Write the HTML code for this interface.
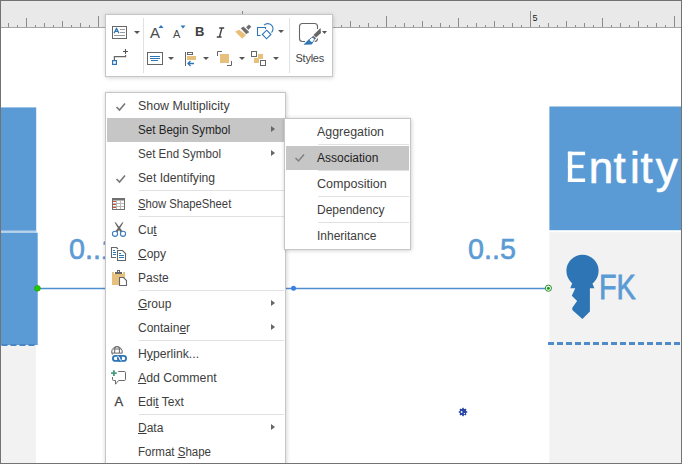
<!DOCTYPE html>
<html><head><meta charset="utf-8">
<style>
*{margin:0;padding:0;box-sizing:border-box}
html,body{width:682px;height:464px;overflow:hidden;background:#fff}
body{position:relative;font-family:"Liberation Sans",sans-serif}
.abs{position:absolute}
#frame{position:absolute;left:0;top:0;width:682px;height:464px;border:1px solid #737373;pointer-events:none;z-index:50}
#ruler{position:absolute;left:0;top:0;width:682px;height:28px;background:#e9e9e9;border-bottom:1px solid #a6a6a6}
.tk{position:absolute;width:1px;background:#8c8c8c}
.rl5{position:absolute;left:532.5px;top:13px;font-size:9px;color:#222;line-height:10px}
/* toolbar */
#tb{position:absolute;left:105px;top:14px;width:228px;height:63px;background:#fff;border:1px solid #c6c6c6;box-shadow:0 0 4px rgba(0,0,0,0.10),1px 2px 4px rgba(0,0,0,0.08);z-index:10}
.vsep{position:absolute;width:1px;background:#dfe1e5}
.dd{position:absolute;width:0;height:0;border-left:3px solid transparent;border-right:3px solid transparent;border-top:3px solid #555}
/* menu */
#menu{position:absolute;left:105px;top:92px;width:181px;height:380px;background:#fff;border:1px solid #c6c6c6;box-shadow:0 0 4px rgba(0,0,0,0.10),1px 1px 4px rgba(0,0,0,0.10);z-index:20}
.mi{position:absolute;left:1px;width:178px;height:24px}
.mi.hl{background:#c6c6c6}
.hl .lb{color:#1f1f1f!important}
.mi .lb{transform-origin:0 0;position:absolute;left:31px;top:5px;font-size:12px;line-height:14px;color:#3d3d3d;white-space:nowrap}
.mi .ck{position:absolute;left:7.5px;top:8px}
.ar{position:absolute;left:164px;top:8px;width:0;height:0;border-top:3.5px solid transparent;border-bottom:3.5px solid transparent;border-left:4px solid #666}
.sep{position:absolute;left:33px;width:145px;height:1px;background:#dfe1e5}
u{text-decoration:underline;text-decoration-thickness:1px;text-underline-offset:1px}
#sub{position:absolute;left:284px;top:118px;width:127px;height:132px;background:#fff;border:1px solid #c6c6c6;box-shadow:0 0 4px rgba(0,0,0,0.10),1px 1px 4px rgba(0,0,0,0.10);z-index:30}
.si{position:absolute;left:1px;width:123px;height:25px}
.si.hl{background:linear-gradient(#fff 0,#fff 1px,#c6c6c6 1px)}
.si .lb{transform-origin:0 0;position:absolute;left:31px;top:6px;font-size:12px;line-height:14px;color:#3d3d3d;white-space:nowrap}
.si .ck2{position:absolute;left:8px;top:8px}
.ssep{position:absolute;left:33px;width:91px;height:1px;background:#dfe1e5}
</style></head><body>
<div id="ruler">
<div class="tk" style="left:8px;top:23px;height:4px"></div>
<div class="tk" style="left:17px;top:25px;height:2px"></div>
<div class="tk" style="left:26px;top:18px;height:9px"></div>
<div class="tk" style="left:35px;top:25px;height:2px"></div>
<div class="tk" style="left:44px;top:23px;height:4px"></div>
<div class="tk" style="left:53px;top:25px;height:2px"></div>
<div class="tk" style="left:62px;top:21px;height:6px"></div>
<div class="tk" style="left:71px;top:25px;height:2px"></div>
<div class="tk" style="left:80px;top:23px;height:4px"></div>
<div class="tk" style="left:89px;top:25px;height:2px"></div>
<div class="tk" style="left:98px;top:16px;height:11px"></div>
<div class="tk" style="left:107px;top:25px;height:2px"></div>
<div class="tk" style="left:116px;top:23px;height:4px"></div>
<div class="tk" style="left:125px;top:25px;height:2px"></div>
<div class="tk" style="left:134px;top:21px;height:6px"></div>
<div class="tk" style="left:143px;top:25px;height:2px"></div>
<div class="tk" style="left:152px;top:23px;height:4px"></div>
<div class="tk" style="left:161px;top:25px;height:2px"></div>
<div class="tk" style="left:170px;top:18px;height:9px"></div>
<div class="tk" style="left:179px;top:25px;height:2px"></div>
<div class="tk" style="left:188px;top:23px;height:4px"></div>
<div class="tk" style="left:197px;top:25px;height:2px"></div>
<div class="tk" style="left:206px;top:21px;height:6px"></div>
<div class="tk" style="left:215px;top:25px;height:2px"></div>
<div class="tk" style="left:224px;top:23px;height:4px"></div>
<div class="tk" style="left:233px;top:25px;height:2px"></div>
<div class="tk" style="left:242px;top:11px;height:16px"></div>
<div class="tk" style="left:251px;top:25px;height:2px"></div>
<div class="tk" style="left:260px;top:23px;height:4px"></div>
<div class="tk" style="left:269px;top:25px;height:2px"></div>
<div class="tk" style="left:278px;top:21px;height:6px"></div>
<div class="tk" style="left:287px;top:25px;height:2px"></div>
<div class="tk" style="left:296px;top:23px;height:4px"></div>
<div class="tk" style="left:305px;top:25px;height:2px"></div>
<div class="tk" style="left:314px;top:18px;height:9px"></div>
<div class="tk" style="left:323px;top:25px;height:2px"></div>
<div class="tk" style="left:332px;top:23px;height:4px"></div>
<div class="tk" style="left:341px;top:25px;height:2px"></div>
<div class="tk" style="left:350px;top:21px;height:6px"></div>
<div class="tk" style="left:359px;top:25px;height:2px"></div>
<div class="tk" style="left:368px;top:23px;height:4px"></div>
<div class="tk" style="left:377px;top:25px;height:2px"></div>
<div class="tk" style="left:386px;top:16px;height:11px"></div>
<div class="tk" style="left:395px;top:25px;height:2px"></div>
<div class="tk" style="left:404px;top:23px;height:4px"></div>
<div class="tk" style="left:413px;top:25px;height:2px"></div>
<div class="tk" style="left:422px;top:21px;height:6px"></div>
<div class="tk" style="left:431px;top:25px;height:2px"></div>
<div class="tk" style="left:440px;top:23px;height:4px"></div>
<div class="tk" style="left:449px;top:25px;height:2px"></div>
<div class="tk" style="left:458px;top:18px;height:9px"></div>
<div class="tk" style="left:467px;top:25px;height:2px"></div>
<div class="tk" style="left:476px;top:23px;height:4px"></div>
<div class="tk" style="left:485px;top:25px;height:2px"></div>
<div class="tk" style="left:494px;top:21px;height:6px"></div>
<div class="tk" style="left:503px;top:25px;height:2px"></div>
<div class="tk" style="left:512px;top:23px;height:4px"></div>
<div class="tk" style="left:521px;top:25px;height:2px"></div>
<div class="tk" style="left:530px;top:11px;height:16px"></div>
<div class="tk" style="left:539px;top:25px;height:2px"></div>
<div class="tk" style="left:548px;top:23px;height:4px"></div>
<div class="tk" style="left:557px;top:25px;height:2px"></div>
<div class="tk" style="left:566px;top:21px;height:6px"></div>
<div class="tk" style="left:575px;top:25px;height:2px"></div>
<div class="tk" style="left:584px;top:23px;height:4px"></div>
<div class="tk" style="left:593px;top:25px;height:2px"></div>
<div class="tk" style="left:602px;top:18px;height:9px"></div>
<div class="tk" style="left:611px;top:25px;height:2px"></div>
<div class="tk" style="left:620px;top:23px;height:4px"></div>
<div class="tk" style="left:629px;top:25px;height:2px"></div>
<div class="tk" style="left:638px;top:21px;height:6px"></div>
<div class="tk" style="left:647px;top:25px;height:2px"></div>
<div class="tk" style="left:656px;top:23px;height:4px"></div>
<div class="tk" style="left:665px;top:25px;height:2px"></div>
<div class="tk" style="left:674px;top:16px;height:11px"></div>
<div class="rl5">5</div>
</div>

<!-- left entity -->
<svg class="abs" style="left:0;top:0" width="682" height="464">
 <rect x="1" y="107.4" width="35.2" height="123.4" fill="#5b9bd5"/>
 <rect x="1" y="230.8" width="35.6" height="2" fill="#b9d2eb"/>
 <rect x="1" y="232.8" width="36.7" height="112.2" fill="#5b9bd5"/>
 <rect x="549.4" y="106.5" width="133" height="123.7" fill="#5b9bd5"/>
 <rect x="549.4" y="232.2" width="133" height="232" fill="#f2f2f2"/>
</svg>
<div class="abs" style="left:1px;top:345px;width:35.4px;height:119px;background:#f2f2f2"></div>
<svg class="abs" style="left:0;top:343px" width="40" height="4"><line x1="1.5" y1="2" x2="37" y2="2" stroke="#4a86c5" stroke-width="2" stroke-dasharray="6 3"/></svg>

<!-- right entity -->

<svg class="abs" style="left:560px;top:145px" width="40" height="45"><g fill="#fff"><rect x="7.9" y="6.7" width="4.3" height="30.3"/><rect x="7.9" y="6.7" width="17.2" height="3.5"/><rect x="7.9" y="19.8" width="15.6" height="3.3"/><rect x="7.9" y="33.5" width="17.2" height="3.5"/></g></svg>
<div class="abs" style="left:588.8px;top:138px;font-size:44px;line-height:60px;color:#fff;-webkit-text-stroke:0.6px #fff">n</div>
<div class="abs" style="left:613.6px;top:138px;font-size:44px;line-height:60px;color:#fff;-webkit-text-stroke:0.6px #fff">t</div>
<div class="abs" style="left:629.9px;top:138px;font-size:44px;line-height:60px;color:#fff;-webkit-text-stroke:0.6px #fff">i</div>
<div class="abs" style="left:640.4px;top:138px;font-size:44px;line-height:60px;color:#fff;-webkit-text-stroke:0.6px #fff">t</div>
<div class="abs" style="left:655.8px;top:138px;font-size:44px;line-height:60px;color:#fff;-webkit-text-stroke:0.6px #fff">y</div>

<svg class="abs" style="left:540px;top:340px" width="142" height="6"><line x1="8" y1="3.5" x2="142" y2="3.5" stroke="#4f8bc9" stroke-width="3" stroke-dasharray="6 3"/></svg>
<svg class="abs" style="left:560px;top:250px" width="40" height="72" viewBox="0 0 40 72">
 <circle cx="22.5" cy="20.8" r="16.1" fill="#2e75b6"/>
 <path d="M12.3 32.9 H32.2 L34.4 38.2 H29.9 V61.6 L22.4 69.1 L12.3 60 V57.8 L17.1 51 L11.8 45.7 L15.3 38.2 H10.3 Z" fill="#2e75b6"/>
</svg>
<div class="abs" style="left:599px;top:246.5px;font-size:35.5px;line-height:80px;color:#5b9bd5;-webkit-text-stroke:0.8px #5b9bd5;white-space:nowrap;transform-origin:0 0;transform:scaleX(0.81)">FK</div>

<!-- labels -->
<div class="abs" style="left:68.7px;top:208.6px;font-size:30.2px;line-height:80px;color:#5b9bd5;-webkit-text-stroke:0.6px #5b9bd5;white-space:nowrap;transform-origin:0 0;transform:scaleX(0.95)">0..1</div>
<div class="abs" style="left:467.5px;top:208.6px;font-size:30.2px;line-height:80px;color:#5b9bd5;-webkit-text-stroke:0.6px #5b9bd5;white-space:nowrap;transform-origin:0 0;transform:scaleX(0.95)">0..5</div>

<!-- connector -->
<svg class="abs" style="left:0;top:280px" width="682" height="16"><line x1="37" y1="8.5" x2="549" y2="8.5" stroke="#4f8fd0" stroke-width="1.7"/></svg>
<svg class="abs" style="left:32px;top:283px" width="12" height="12"><circle cx="5.5" cy="5.3" r="2.9" fill="#22c800" stroke="#1a9a00" stroke-width="0.6"/></svg>
<svg class="abs" style="left:542px;top:282px" width="13" height="13"><circle cx="6.4" cy="6.2" r="3.1" fill="#fff" stroke="#2e8b2e" stroke-width="1"/><circle cx="6.4" cy="6.2" r="1.5" fill="#0aa50a"/></svg>
<svg class="abs" style="left:289px;top:284px" width="9" height="9"><circle cx="4.5" cy="4.3" r="2.5" fill="#3a80e0"/></svg>
<!-- small gear handle -->
<svg class="abs" style="left:456px;top:405px" width="14" height="14" viewBox="0 0 14 14">
 <g fill="#2b47a6">
  <circle cx="7" cy="7" r="3.3"/>
  <rect x="6.2" y="2.8" width="1.6" height="8.4"/>
  <rect x="2.8" y="6.2" width="8.4" height="1.6"/>
  <rect x="6.2" y="2.8" width="1.6" height="8.4" transform="rotate(45 7 7)"/>
  <rect x="6.2" y="2.8" width="1.6" height="8.4" transform="rotate(-45 7 7)"/>
 </g>
 <circle cx="5.6" cy="7" r="0.9" fill="#fff"/>
 <circle cx="8.4" cy="8.6" r="0.7" fill="#fff"/>
</svg>
<!-- toolbar -->
<div id="tb">
 <!-- text block icon -->
 <svg class="abs" style="left:6px;top:11px" width="16" height="14" viewBox="0 0 16 14">
  <rect x="0.5" y="0.5" width="14" height="12" fill="#fff" stroke="#666"/>
  <path d="M2.1 7.2 L4.5 2.3 L6.9 7.2 M3.2 5.4 H5.8" stroke="#2e75b6" stroke-width="1.3" fill="none" stroke-linejoin="round"/>
  <rect x="8" y="3" width="5" height="1" fill="#999"/><rect x="8" y="6" width="5" height="1" fill="#999"/><rect x="2" y="9" width="11" height="1" fill="#999"/>
 </svg>
 <div class="dd" style="left:28px;top:16px"></div>
 <div class="vsep" style="left:37px;top:3px;height:55px"></div>
 <!-- grow font -->
 <div class="abs" style="left:44px;top:10px;font-size:15px;line-height:15px;color:#4a4a4a">A</div>
 <svg class="abs" style="left:52px;top:10px" width="7" height="4"><path d="M0.5 3 L3 0 L5.5 3 Z" fill="#2e75b6"/></svg>
 <div class="abs" style="left:67px;top:14px;font-size:11px;line-height:11px;color:#4a4a4a">A</div>
 <svg class="abs" style="left:74px;top:10px" width="7" height="4"><path d="M0.5 0.5 L5.5 0.5 L3 3.5 Z" fill="#2e75b6"/></svg>
 <div class="abs" style="left:89px;top:10px;font:bold 13px 'Liberation Sans',sans-serif;line-height:14px;color:#404040">B</div>
 <svg class="abs" style="left:110px;top:12px" width="10" height="12" viewBox="0 0 10 12"><path d="M3.2 1 H8.2 M5.9 1 L3.4 10 M0.8 10 H5.6" stroke="#444" stroke-width="1.4" fill="none"/></svg>
 <!-- format painter -->
 <svg class="abs" style="left:129px;top:9px" width="18" height="16" viewBox="0 0 18 16">
  <path d="M0.1 7.4 L4.3 5.7 L11 10.9 L7.2 14.7 Z" fill="#e9bf78"/>
  <path d="M6.2 4.3 L8.6 3.1 L13.8 8.1 L11.2 9.7 Z" fill="#6a6a6a" stroke="#6a6a6a" stroke-width="0.8" stroke-linejoin="round"/>
  <path d="M11.5 3.1 L13.8 1 L16 2.6 L13.4 5.5 Z" fill="#6a6a6a" stroke="#6a6a6a" stroke-width="0.6" stroke-linejoin="round"/>
 </svg>
 <!-- shapes -->
 <svg class="abs" style="left:150px;top:8px" width="20" height="18" viewBox="0 0 20 18">
  <path d="M4.6 12.5 H1.5 V4.5 H9.5 V6" stroke="#2e75b6" stroke-width="1.1" fill="none"/>
  <path d="M8 2.2 A5.2 5.2 0 1 1 15.5 9.6" stroke="#2e75b6" stroke-width="1.1" fill="none"/>
  <path d="M10.6 7.2 L14.9 11.5 L10.6 15.8 L6.3 11.5 Z" stroke="#2e75b6" stroke-width="1.1" fill="none"/>
 </svg>
 <div class="dd" style="left:172px;top:15px"></div>
 <div class="vsep" style="left:183px;top:3px;height:55px"></div>
 <!-- styles -->
 <svg class="abs" style="left:191px;top:7px" width="34" height="26" viewBox="0 0 34 26">
  <path d="M20.5 7 V4.5 Q20.5 1.5 17.5 1.5 H5.5 Q2.5 1.5 2.5 4.5 V16.5 Q2.5 19.5 5.5 19.5 H8" stroke="#666" stroke-width="1.1" fill="none"/>
  <path d="M17.7 19.5 Q20.5 19.5 20.5 16.5" stroke="#666" stroke-width="1.1" fill="none"/>
  <path d="M23.5 6 L24 11 L19 15.5 L16.5 13 Z" fill="#666"/>
  <path d="M16.2 13.8 L19 16.3 L17.5 17.8 L14.8 15.3 Z" fill="#666"/>
  <path d="M6.5 22.8 L11.6 17.4 L16.2 20.6 L14.6 22.6 Z" fill="#2e75b6"/>
  <ellipse cx="14.2" cy="18.6" rx="3.3" ry="2.2" fill="none" stroke="#3a7cc0" stroke-width="0.9" transform="rotate(-45 14.2 18.6)"/>
  <ellipse cx="15" cy="17.8" rx="2.1" ry="1.4" fill="#fff" transform="rotate(-45 15 17.8)"/>
  <path d="M25 9 H30 L27.5 12 Z" fill="#555"/>
 </svg>
 <div class="abs" style="left:189.5px;top:36px;font-size:11px;line-height:14px;color:#444;letter-spacing:-0.25px">Styles</div>
 <!-- row 2 -->
 <svg class="abs" style="left:6px;top:34px" width="18" height="18" viewBox="0 0 18 18">
  <path d="M2.4 11.2 V7.6 H13.6 V6" stroke="#666" stroke-width="1.2" fill="none"/>
  <path d="M13.5 0 V5 M11 2.5 H16" stroke="#555" stroke-width="1.1"/>
  <rect x="0.6" y="11.6" width="3.8" height="3.8" fill="#fff" stroke="#2e75b6" stroke-width="1.2"/>
 </svg>
 <svg class="abs" style="left:41px;top:37px" width="16" height="14" viewBox="0 0 16 14">
  <rect x="0.5" y="0.5" width="15" height="12" fill="#fff" stroke="#666"/>
  <rect x="3" y="4" width="10" height="1" fill="#2e75b6"/><rect x="3" y="6" width="10" height="1" fill="#2e75b6"/><rect x="4" y="8" width="7" height="1" fill="#2e75b6"/>
 </svg>
 <div class="dd" style="left:62px;top:42px"></div>
 <svg class="abs" style="left:79px;top:37px" width="14" height="16" viewBox="0 0 14 16">
  <rect x="0" y="0" width="1" height="14" fill="#666"/>
  <rect x="2.5" y="0.5" width="5" height="2" fill="#fff" stroke="#666" stroke-width="1"/>
  <rect x="2" y="4" width="9" height="4" fill="#e8c07d"/>
  <path d="M9 11.5 H3 M5.5 9 L3 11.5 L5.5 14" stroke="#2e75b6" stroke-width="1.3" fill="none"/>
 </svg>
 <div class="dd" style="left:97px;top:42px"></div>
 <svg class="abs" style="left:111px;top:36px" width="18" height="17" viewBox="0 0 18 17">
  <path d="M0.5 5 V0.5 H5" stroke="#666" stroke-width="1" fill="none"/>
  <rect x="3" y="3" width="9" height="9" fill="#e8c07d"/>
  <path d="M14.5 10 V14.5 H10" stroke="#666" stroke-width="1" fill="none"/>
 </svg>
 <div class="dd" style="left:133px;top:42px"></div>
 <svg class="abs" style="left:145px;top:36px" width="18" height="17" viewBox="0 0 18 17">
  <rect x="0.5" y="0.5" width="5" height="5" fill="#fff" stroke="#666"/>
  <rect x="7" y="3" width="5" height="5" fill="#e8c07d"/>
  <rect x="3" y="7" width="5" height="5" fill="#e8c07d"/>
  <rect x="9.5" y="9.5" width="5" height="5" fill="#fff" stroke="#666"/>
 </svg>
 <div class="dd" style="left:167px;top:42px"></div>
</div>

<div id="menu">
<div class="mi" style="top:1px"><svg class="ck" width="12" height="10" viewBox="0 0 12 10"><path d="M1.5 5 L4.5 8 L10 1.5" stroke="#777" stroke-width="1.6" fill="none"/></svg><span class="lb" style="transform:scaleX(1.034)">Show Multiplicity</span></div>
<div class="mi hl" style="top:25px"><span class="lb" style="transform:scaleX(0.968)">Set Begin Symbol</span><div class="ar"></div></div>
<div class="mi" style="top:49px"><span class="lb" style="transform:scaleX(0.964)">Set End Symbol</span><div class="ar"></div></div>
<div class="mi" style="top:73px"><svg class="ck" width="12" height="10" viewBox="0 0 12 10"><path d="M1.5 5 L4.5 8 L10 1.5" stroke="#777" stroke-width="1.6" fill="none"/></svg><span class="lb" style="transform:scaleX(1.014)">Set Identifying</span></div>
<div class="sep" style="top:97px"></div>
<div class="mi" style="top:99px"><svg width="30" height="24" viewBox="0 0 30 24" style="position:absolute;left:0;top:0">
   <rect x="5" y="6" width="13" height="12" fill="#707070"/>
   <rect x="6" y="8" width="11" height="9" fill="#b8b8b8"/>
   <rect x="6" y="9" width="3" height="2" fill="#fff"/><rect x="10" y="9" width="3" height="2" fill="#fff"/><rect x="14" y="9" width="3" height="2" fill="#fff"/>
   <rect x="6" y="12" width="3" height="2" fill="#fff"/><rect x="10" y="12" width="3" height="2" fill="#fff"/><rect x="14" y="12" width="3" height="2" fill="#fff"/>
   <rect x="6" y="15" width="3" height="2" fill="#fff"/><rect x="10" y="15" width="3" height="2" fill="#fff"/><rect x="14" y="15" width="3" height="2" fill="#fff"/>
   <rect x="6" y="9" width="3" height="1" fill="#d9502b"/><rect x="6" y="12" width="3" height="1" fill="#d9502b"/><rect x="6" y="15" width="3" height="1" fill="#d9502b"/>
 </svg><span class="lb" style="transform:scaleX(0.938)"><u>S</u>how ShapeSheet</span></div>
<div class="sep" style="top:123px"></div>
<div class="mi" style="top:125px"><svg width="30" height="24" viewBox="0 0 30 24" style="position:absolute;left:0;top:0">
   <path d="M7.6 4.6 Q8.2 4 8.8 4.4 L15.4 13 L13.4 14.2 Z" fill="#676767"/><path d="M16.4 4.6 Q15.8 4 15.2 4.4 L8.6 13 L10.6 14.2 Z" fill="#676767"/>
   <circle cx="8" cy="15.8" r="2.6" stroke="#3a7cc0" stroke-width="1.1" fill="#fff"/>
   <circle cx="16" cy="15.8" r="2.6" stroke="#3a7cc0" stroke-width="1.1" fill="#fff"/>
 </svg><span class="lb">Cu<u>t</u></span></div>
<div class="mi" style="top:149px"><svg width="30" height="24" viewBox="0 0 30 24" style="position:absolute;left:0;top:0">
   <path d="M9 15.5 H4.5 V5.5 H9.5 L11 7" stroke="#666" stroke-width="1.1" fill="none"/>
   <path d="M10.5 8.5 H15.5 L18.5 11.5 V18.5 H10.5 Z" stroke="#666" stroke-width="1.1" fill="#fff"/>
   <rect x="6" y="8" width="2" height="1" fill="#2e75b6"/><rect x="6" y="10" width="3" height="1" fill="#2e75b6"/><rect x="6" y="12" width="3" height="1" fill="#2e75b6"/>
   <rect x="12" y="11" width="2" height="1" fill="#2e75b6"/><rect x="12" y="13" width="5" height="1" fill="#2e75b6"/><rect x="12" y="15" width="5" height="1" fill="#2e75b6"/>
 </svg><span class="lb"><u>C</u>opy</span></div>
<div class="mi" style="top:173px"><svg width="30" height="24" viewBox="0 0 30 24" style="position:absolute;left:0;top:0">
   <rect x="5" y="6" width="13" height="13" fill="#e8c07d"/>
   <rect x="7" y="6" width="9" height="2" fill="#fff"/>
   <rect x="8" y="6" width="7" height="2" fill="#666"/>
   <rect x="10.5" y="4.5" width="2" height="2" fill="#fff" stroke="#666" stroke-width="1"/>
   <path d="M12.5 11.5 H16.5 L19.5 14.5 V19.5 H12.5 Z" stroke="#666" stroke-width="1.1" fill="#fff"/>
 </svg><span class="lb">Paste</span></div>
<div class="sep" style="top:197px"></div>
<div class="mi" style="top:199px"><span class="lb"><u>G</u>roup</span><div class="ar"></div></div>
<div class="mi" style="top:223px"><span class="lb">Contain<u>e</u>r</span><div class="ar"></div></div>
<div class="sep" style="top:247px"></div>
<div class="mi" style="top:249px"><svg width="30" height="24" viewBox="0 0 30 24" style="position:absolute;left:0;top:0">
   <path d="M5.41 12.55 A5.3 5.3 0 1 1 15.12 11.27" stroke="#676767" stroke-width="1" fill="none"/>
   <path d="M6.3 7 H13.7 M4.9 11.1 H15.2 M7.7 11 V7 Q7.7 4.6 10 4.6 Q12.4 4.6 12.4 7 V11" stroke="#676767" stroke-width="1" fill="none"/>
   <rect x="5.9" y="13.9" width="8.2" height="5" rx="2.5" stroke="#2e75b6" stroke-width="1.8" fill="none"/>
   <rect x="10.9" y="13.9" width="8.2" height="5" rx="2.5" stroke="#2e75b6" stroke-width="1.8" fill="none"/>
   <path d="M10.6 13.6 L14.2 18.9" stroke="#fff" stroke-width="0.9"/>
 </svg><span class="lb" style="transform:scaleX(1.017)">H<u>y</u>perlink...</span></div>
<div class="mi" style="top:273px"><svg width="30" height="24" viewBox="0 0 30 24" style="position:absolute;left:0;top:0">
   <path d="M11.2 5.5 H17.3 Q18.5 5.5 18.5 6.7 V13.3 Q18.5 14.5 17.3 14.5 H11.6 L8.5 18.2 V14.5 H6.7 Q5.5 14.5 5.5 13.3 V11" stroke="#6b6b6b" stroke-width="1" fill="none"/>
   <path d="M6.9 4.3 V9.9 M4.1 7.1 H9.7" stroke="#4a9e7f" stroke-width="1.9"/>
 </svg><span class="lb" style="transform:scaleX(1.026)"><u>A</u>dd Comment</span></div>
<div class="mi" style="top:297px"><div style="position:absolute;left:7.5px;top:5px;font:13px/14px 'Liberation Sans',sans-serif;color:#444;-webkit-text-stroke:0.3px #444">A</div><span class="lb">Edi<u>t</u> Text</span></div>
<div class="sep" style="top:321px"></div>
<div class="mi" style="top:323px"><span class="lb"><u>D</u>ata</span><div class="ar"></div></div>
<div class="mi" style="top:347px"><span class="lb" style="transform:scaleX(0.96)">Format <u>S</u>hape</span></div>
</div>
<div id="sub">
<div class="si" style="top:0px"><span class="lb" style="transform:scaleX(1.035)">Aggregation</span></div>
<div class="ssep" style="top:25px"></div>
<div class="si hl" style="top:26px"><svg class="ck2" width="12" height="10" viewBox="0 0 12 10"><path d="M1.5 5 L4.5 8 L10 1.5" stroke="#808080" stroke-width="1.5" fill="none"/></svg><span class="lb">Association</span></div>
<div class="ssep" style="top:51px"></div>
<div class="si" style="top:52px"><span class="lb" style="transform:scaleX(1.045)">Composition</span></div>
<div class="ssep" style="top:77px"></div>
<div class="si" style="top:78px"><span class="lb">Dependency</span></div>
<div class="ssep" style="top:103px"></div>
<div class="si" style="top:104px"><span class="lb">Inheritance</span></div>
</div>
<div id="frame"></div>
</body></html>
